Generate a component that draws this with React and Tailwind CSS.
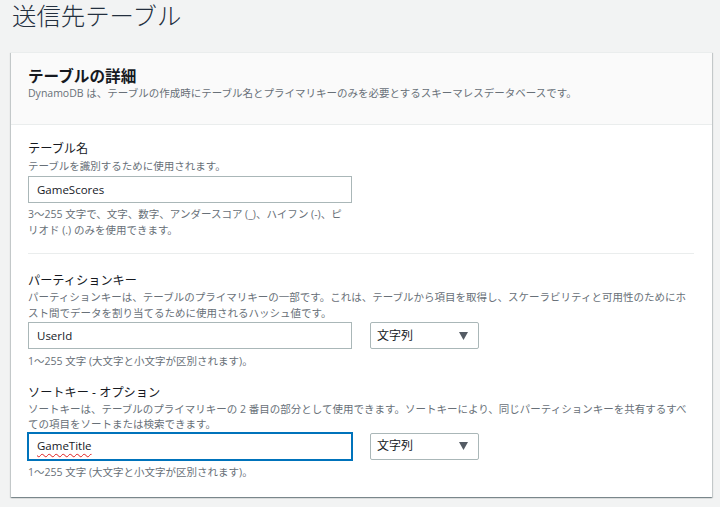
import React from 'react';

const font = { fontFamily: '"Open Sans", "Noto Sans CJK JP", sans-serif' };

function Label({ children, className = '' }) {
  return (
    <div className={`text-[12.2px] leading-[16px] text-[#16191f] ${className}`}>
      {children}
    </div>
  );
}

function Help({ children, className = '' }) {
  return (
    <div className={`text-[10.5px] leading-[15.5px] text-[#687078] whitespace-nowrap ${className}`}>
      {children}
    </div>
  );
}

function TextInput({ value, focused = false, spell = false }) {
  return (
    <div
      className={`w-[324px] h-[27px] flex items-center pl-[8px] bg-white text-[11.5px] text-[#16191f] ${
        focused
          ? 'border border-[#0073bb] shadow-[0_0_0_1px_#0073bb]'
          : 'border border-[#aab7b8]'
      }`}
    >
      <span className={spell ? 'underline decoration-wavy decoration-[#e02020] decoration-1 underline-offset-[3px]' : ''}>
        {value}
      </span>
    </div>
  );
}

function Select() {
  return (
    <div className="w-[109px] h-[27px] flex items-center justify-between pl-[6px] pr-[10px] bg-white border border-[#aab7b8] rounded-[2px] text-[12px] text-[#16191f]">
      <span>文字列</span>
      <svg width="9" height="8" viewBox="0 0 9 8">
        <path d="M0 0 H9 L4.5 8 Z" fill="#545b64" />
      </svg>
    </div>
  );
}

export default function App() {
  return (
    <div className="w-[720px] h-[507px] bg-[#f2f3f3] overflow-hidden" style={font}>
      {/* ページタイトル */}
      <h1 className="pl-[12px] pt-[1px] text-[24.4px] leading-[30px] font-light text-[#232f3e]">
        送信先テーブル
      </h1>

      {/* カード */}
      <div className="mt-[21px] ml-[11px] w-[701px] bg-white shadow-[0_1px_1px_0_rgba(0,28,36,0.3),1px_1px_1px_0_rgba(0,28,36,0.15),-1px_1px_1px_0_rgba(0,28,36,0.15)] border-t border-[#eaeded]">
        <div className="bg-[#fafafa] border-b border-[#eaeded] pl-[17px] pt-[15px] pb-[23px]">
          <div className="text-[15.6px] leading-[17px] font-bold text-[#16191f]">テーブルの詳細</div>
          <Help className="leading-[16px]">
            DynamoDB は、テーブルの作成時にテーブル名とプライマリキーのみを必要とするスキーマレスデータベースです。
          </Help>
        </div>

        <div className="pl-[17px] pr-[18px] pt-[16px] pb-[17px]">
          <Label>テーブル名</Label>
          <Help className="mt-[2px] leading-[15px]">テーブルを識別するために使用されます。</Help>
          <div className="mt-[2px]">
            <TextInput value="GameScores" />
          </div>
          <Help className="mt-[4px]">
            3～255 文字で、文字、数字、アンダースコア (_)、ハイフン (-)、ピ
            <br />
            リオド (.) のみを使用できます。
          </Help>

          <div className="mt-[15px] border-t border-[#eaeded]" />

          <Label className="mt-[19px]">パーティションキー</Label>
          <Help className="mt-[1px]">
            パーティションキーは、テーブルのプライマリキーの一部です。これは、テーブルから項目を取得し、スケーラビリティと可用性のためにホ
            <br />
            スト間でデータを割り当てるために使用されるハッシュ値です。
          </Help>
          <div className="mt-[1px] flex gap-[18px]">
            <TextInput value="UserId" />
            <Select />
          </div>
          <Help className="mt-[5px]">1～255 文字 (大文字と小文字が区別されます)。</Help>

          <Label className="mt-[15px]">ソートキー - オプション</Label>
          <Help className="mt-[1px]">
            ソートキーは、テーブルのプライマリキーの 2 番目の部分として使用できます。ソートキーにより、同じパーティションキーを共有するすべ
            <br />
            ての項目をソートまたは検索できます。
          </Help>
          <div className="mt-[0px] flex gap-[18px]">
            <TextInput value="GameTitle" focused spell />
            <Select />
          </div>
          <Help className="mt-[5px]">1～255 文字 (大文字と小文字が区別されます)。</Help>
        </div>
      </div>
    </div>
  );
}
